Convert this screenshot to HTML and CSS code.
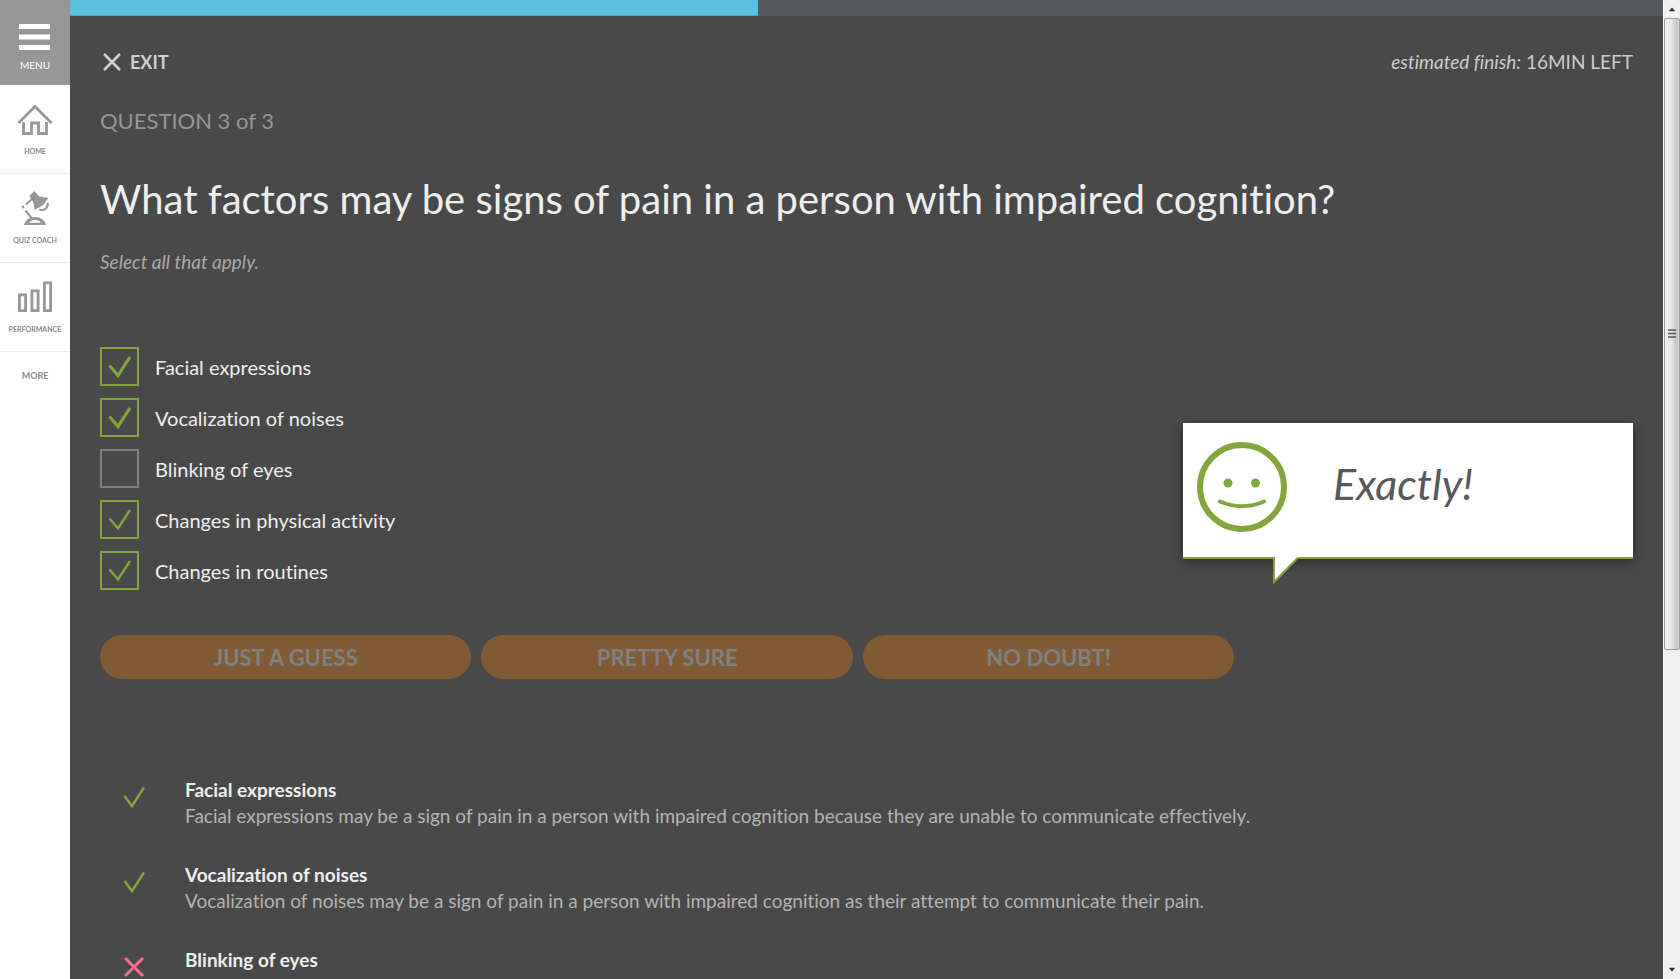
FILE: index.html
```html
<!DOCTYPE html>
<html lang="en">
<head>
<meta charset="utf-8">
<title>Question 3 of 3</title>
<link rel="stylesheet" href="styles.css">
</head>
<body>
<div class="app">
  <nav class="sidebar" aria-label="Main">
    <button class="menu-button" type="button">
      <svg width="32" height="28" viewBox="0 0 32 28" aria-hidden="true"><path d="M0 3.500h31M0 14h31M0 24.500h31" stroke="#fff" stroke-width="5"/></svg>
      <span>MENU</span>
    </button>
    <a class="nav-item" href="#home">
      <svg width="36" height="36" viewBox="0 0 36 36" aria-hidden="true"><g fill="none" stroke="#979797" stroke-width="2.800"><path d="M1.500 22 18 5.500 34.500 22"/><path d="M6.500 21v11.500h8V22h7v10.500h8V21"/></g></svg>
      <span>HOME</span>
    </a>
    <a class="nav-item" href="#coach">
      <svg width="36" height="36" viewBox="0 0 36 36" aria-hidden="true"><g fill="#979797"><path d="m17.300 1 5 5.500 9 1.500-5 7-8.600 5-1.400-7.500-4-6.500z"/><circle cx="6" cy="17" r="1.400"/><path fill-rule="evenodd" d="M7 35c1-4.500 5.500-8 11-8s10 3.500 11 8zm5-2.300h12c-1.500-1.800-3.500-2.700-6-2.700s-4.500.9-6 2.700z"/></g><g fill="none" stroke="#979797" stroke-width="2"><path d="m15.500 8.500-6.500 6M8.500 20.500l6.500 8M30.500 12.700c1.500 4-3 9-8.200 6.800"/></g></svg>
      <span>QUIZ COACH</span>
    </a>
    <a class="nav-item" href="#performance">
      <svg width="36" height="36" viewBox="0 0 36 36" aria-hidden="true"><g fill="none" stroke="#979797" stroke-width="2.800"><path d="M2.400 15.900h6.200v15.700H2.400zM14.900 11.900h6.200v19.700h-6.200zM27.400 3.900h6.200v27.700h-6.200z"/></g></svg>
      <span>PERFORMANCE</span>
    </a>
    <a class="more" href="#more">MORE</a>
  </nav>

  <main class="main">
    <div class="progress"><div class="progress-fill" style="width:43.2%"></div></div>
    <div class="content">
      <header class="topbar">
        <button class="exit" type="button">
          <svg width="18" height="18" viewBox="0 0 18 18" aria-hidden="true"><path d="m1 1 16 16M17 1 1 17" stroke="#d0d0d0" stroke-width="2.500"/></svg>
          EXIT
        </button>
        <p class="estimate"><em>estimated finish:</em> 16MIN LEFT</p>
      </header>

      <p class="counter">QUESTION 3 of 3</p>
      <h1 class="question">What factors may be signs of pain in a person with impaired cognition?</h1>
      <p class="hint">Select all that apply.</p>

      <div class="answers">
        <label class="answer"><input type="checkbox" checked><svg class="tick" viewBox="0 0 24 24" aria-hidden="true"><path class="bold" d="m1.500 10.500 8.500 10L22 2"/></svg><span>Facial expressions</span></label>
        <label class="answer"><input type="checkbox" checked><svg class="tick" viewBox="0 0 24 24" aria-hidden="true"><path class="bold" d="m1.500 10.500 8.500 10L22 2"/></svg><span>Vocalization of noises</span></label>
        <label class="answer"><input type="checkbox"><span>Blinking of eyes</span></label>
        <label class="answer"><input type="checkbox" checked><svg class="tick" viewBox="0 0 24 24" aria-hidden="true"><path d="m1.500 10.500 8.500 10L22 2"/></svg><span>Changes in physical activity</span></label>
        <label class="answer"><input type="checkbox" checked><svg class="tick" viewBox="0 0 24 24" aria-hidden="true"><path d="m1.500 10.500 8.500 10L22 2"/></svg><span>Changes in routines</span></label>
      </div>

      <div class="confidence">
        <button type="button" disabled>JUST A GUESS</button>
        <button type="button" disabled>PRETTY SURE</button>
        <button type="button" disabled>NO DOUBT!</button>
      </div>

      <ul class="rationales">
        <li>
          <svg class="mark" viewBox="0 0 22 22" aria-hidden="true"><path d="m1.500 10 7.500 10L21 1.500" stroke="#84a53d"/></svg>
          <div><h2>Facial expressions</h2><p>Facial expressions may be a sign of pain in a person with impaired cognition because they are unable to communicate effectively.</p></div>
        </li>
        <li>
          <svg class="mark" viewBox="0 0 22 22" aria-hidden="true"><path d="m1.500 10 7.500 10L21 1.500" stroke="#84a53d"/></svg>
          <div><h2>Vocalization of noises</h2><p>Vocalization of noises may be a sign of pain in a person with impaired cognition as their attempt to communicate their pain.</p></div>
        </li>
        <li>
          <svg class="mark" viewBox="0 0 22 22" aria-hidden="true"><path d="m2 2 18 18M20 2 2 20" stroke="#f5708c" stroke-width="3"/></svg>
          <div><h2>Blinking of eyes</h2><p>Blinking of eyes is not considered to be a sign of pain in a person with impaired cognition.</p></div>
        </li>
      </ul>
    </div>

    <aside class="feedback" role="status">
      <svg class="face" viewBox="0 0 90 90" aria-hidden="true"><circle cx="45" cy="45" r="42" fill="none" stroke="#84a53d" stroke-width="6"/><circle cx="31" cy="41" r="4.500" fill="#84a53d"/><circle cx="58.500" cy="41" r="4.500" fill="#84a53d"/><path d="M23 59.500q22 9.500 44 0" fill="none" stroke="#84a53d" stroke-width="4" stroke-linecap="round"/></svg>
      <strong>Exactly!</strong>
      <svg class="tail" viewBox="0 0 26 28" aria-hidden="true"><path d="M1 0v25.500L25 1V0z" fill="#fff"/><path d="M1 1v25L24.500 2" fill="none" stroke="#84a53d" stroke-width="2"/></svg>
    </aside>
  </main>

  <div class="scrollbar" aria-hidden="true">
    <svg class="arrow" viewBox="0 0 17 17"><path d="m5 11 3.500-4 3.500 4z" fill="#333"/></svg>
    <div class="track"><div class="thumb"><svg width="8" height="9" viewBox="0 0 8 9"><path d="M0 1h8M0 4.500h8M0 8h8" stroke="#555" stroke-width="1.500"/></svg></div></div>
    <svg class="arrow" viewBox="0 0 17 17"><path d="m5 6 3.500 4L12 6z" fill="#333"/></svg>
  </div>
</div>
</body>
</html>
```
FILE: styles.css
```css
* {
  box-sizing: border-box;
}

body,
h1,
h2,
p,
ul {
  margin: 0;
  padding: 0;
}

body {
  background: #494949;
  color: #eee;
  font-family: Lato, "Open Sans", sans-serif;
  font-variant-ligatures: no-common-ligatures;
  overflow: hidden;
}

button {
  border: 0;
  background: none;
  font-family: inherit;
  cursor: pointer;
}

.app {
  display: flex;
  height: 100vh;
}

/* Sidebar */

.sidebar {
  flex: 0 0 70px;
  display: flex;
  flex-direction: column;
  background: #fff;
}

.menu-button {
  display: flex;
  flex-direction: column;
  align-items: center;
  gap: 8px;
  height: 85px;
  padding: 23px 0 0;
  background: #979797;
  color: #fff;
  font-size: 10px;
  line-height: 12px;
}

.nav-item {
  display: flex;
  flex-direction: column;
  align-items: center;
  gap: 8px;
  height: 89px;
  padding-top: 16px;
  border-bottom: 1px solid #eee;
  color: #8a8a8a;
  font-size: 7px;
  font-weight: bold;
  line-height: 12px;
  text-decoration: none;
}

.more {
  padding-top: 18px;
  color: #8a8a8a;
  font-size: 9px;
  font-weight: bold;
  line-height: 12px;
  text-align: center;
  text-decoration: none;
}

/* Main column */

.main {
  flex: 1;
  min-width: 0;
  position: relative;
  overflow: hidden;
  background: #494949;
}

.progress {
  height: 16px;
  background: #58595b;
}

.progress-fill {
  height: 100%;
  background: #5bbfde;
  border-bottom: 1px solid #4aa3bf;
}

.content {
  padding: 32px 30px 0;
}

.topbar {
  display: flex;
  justify-content: space-between;
  align-items: center;
  height: 28px;
}

.exit {
  display: flex;
  align-items: center;
  gap: 9px;
  padding: 0 3px;
  color: #d0d0d0;
  font-size: 18px;
  font-weight: bold;
}

.estimate {
  color: #ccc;
  font-size: 19px;
  line-height: 26px;
}

.counter {
  margin-top: 30px;
  color: #979797;
  font-size: 22px;
  line-height: 30px;
}

.question {
  margin-top: 39px;
  font-size: 40px;
  font-weight: normal;
  line-height: 48px;
}

.hint {
  margin-top: 27px;
  color: #aaa;
  font-size: 19px;
  font-style: italic;
  line-height: 24px;
}

.answers {
  display: flex;
  flex-direction: column;
  align-items: flex-start;
  gap: 12px;
  margin-top: 73px;
}

.answer {
  display: grid;
  grid-template-columns: 39px auto;
  column-gap: 16px;
  align-items: center;
  font-size: 20px;
}

.answer input {
  appearance: none;
  grid-area: 1 / 1;
  width: 39px;
  height: 39px;
  margin: 0;
  border: 2px solid #808080;
}

.answer input:checked {
  border-color: #84a53d;
}

.answer span {
  grid-area: 1 / 2;
}

.tick {
  grid-area: 1 / 1;
  justify-self: center;
  width: 24px;
  height: 24px;
  fill: none;
  stroke: #84a53d;
  stroke-width: 2.5;
  pointer-events: none;
}

.tick .bold {
  stroke-width: 3.2;
}

.confidence {
  display: grid;
  grid-template-columns: repeat(3, 1fr);
  gap: 10px;
  width: 74%;
  margin-top: 45px;
}

.confidence button {
  height: 44px;
  padding: 0;
  border-radius: 22px;
  background: #805b34;
  color: #808080;
  font-size: 22px;
  font-weight: bold;
}

.rationales {
  display: flex;
  flex-direction: column;
  gap: 33px;
  margin-top: 98px;
  list-style: none;
}

.rationales li {
  display: grid;
  grid-template-columns: 22px 1fr;
  column-gap: 40px;
  padding-left: 23px;
}

.rationales h2 {
  font-size: 19px;
  line-height: 26px;
}

.rationales p {
  color: #b4b4b4;
  font-size: 19px;
  line-height: 26px;
}

.mark {
  width: 22px;
  height: 22px;
  margin-top: 9px;
  fill: none;
  stroke-width: 2.5;
}

/* Feedback bubble floats over the question */

.feedback {
  position: absolute;
  top: 423px;
  right: 30px;
  display: flex;
  align-items: flex-start;
  gap: 46px;
  width: 450px;
  height: 136px;
  padding: 19px 14px 0;
  border-bottom: 2px solid #84a53d;
  background: #fff;
  box-shadow: 0 4px 12px rgba(0, 0, 0, 0.4);
  color: #58595b;
}

.feedback strong {
  font-size: 43px;
  font-style: italic;
  font-weight: normal;
  line-height: 84px;
}

.face {
  width: 90px;
  height: 90px;
}

.tail {
  position: absolute;
  top: 133px;
  left: 90px;
  width: 26px;
  height: 28px;
}

/* Scrollbar */

.scrollbar {
  flex: 0 0 17px;
  display: flex;
  flex-direction: column;
  border-left: 1px solid #fff;
  background: #f0f0f0;
}

.arrow {
  width: 16px;
  height: 18px;
}

.track {
  flex: 1;
}

.thumb {
  display: flex;
  align-items: center;
  justify-content: center;
  height: 67%;
  border: 1px solid #999;
  border-radius: 2px;
  background: linear-gradient(90deg, #f5f5f5, #e4e4e6 45%, #c4c4c8 85%, #dcdcdc);
}
```
